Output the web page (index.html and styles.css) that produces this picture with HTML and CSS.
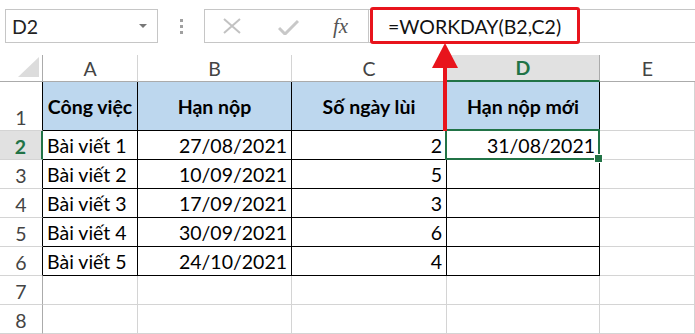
FILE: index.html
```html
<!DOCTYPE html>
<html lang="vi">
<head>
  <meta charset="UTF-8" />
  <title>WORKDAY</title>
  <link rel="stylesheet" href="styles.css">
</head>
<body>
  <div class="toolbar">
    <div class="namebox">
      <span>D2</span>
      <span class="drop"></span>
    </div>
    <div class="grip"><i></i><i></i><i></i></div>
    <div class="formulabar">
      <div class="fbtns">
        <svg class="ico-x" width="18" height="16" viewBox="0 0 18 16">
          <path d="M1 1 L17 15 M17 1 L1 15" stroke="#c2c2c2" stroke-width="2" fill="none"/>
        </svg>
        <svg class="ico-ok" width="21" height="16" viewBox="0 0 21 16">
          <path d="M1 9 L7 15 L20 2" stroke="#c8c8c8" stroke-width="3" fill="none"/>
        </svg>
        <span class="fx">fx</span>
      </div>
      <div class="finput">=WORKDAY(B2,C2)</div>
    </div>
  </div>

  <div class="sheet">
    <div class="c corner"></div>
    <div class="c ch">A</div>
    <div class="c ch">B</div>
    <div class="c ch">C</div>
    <div class="c ch sel">D</div>
    <div class="c ch last">E</div>

    <div class="c rh tb">1</div>
    <div class="c t hd">Công việc</div>
    <div class="c t hd">Hạn nộp</div>
    <div class="c t hd">Số ngày lùi</div>
    <div class="c t hd">Hạn nộp mới</div>
    <div class="c"></div>

    <div class="c rh tb sel">2</div>
    <div class="c t">Bài viết 1</div>
    <div class="c t r">27/08/2021</div>
    <div class="c t r">2</div>
    <div class="c t r active">31/08/2021</div>
    <div class="c"></div>

    <div class="c rh tb">3</div>
    <div class="c t">Bài viết 2</div>
    <div class="c t r">10/09/2021</div>
    <div class="c t r">5</div>
    <div class="c t"></div>
    <div class="c"></div>

    <div class="c rh tb">4</div>
    <div class="c t">Bài viết 3</div>
    <div class="c t r">17/09/2021</div>
    <div class="c t r">3</div>
    <div class="c t"></div>
    <div class="c"></div>

    <div class="c rh tb">5</div>
    <div class="c t">Bài viết 4</div>
    <div class="c t r">30/09/2021</div>
    <div class="c t r">6</div>
    <div class="c t"></div>
    <div class="c"></div>

    <div class="c rh tb">6</div>
    <div class="c t">Bài viết 5</div>
    <div class="c t r">24/10/2021</div>
    <div class="c t r">4</div>
    <div class="c t"></div>
    <div class="c"></div>

    <div class="c rh">7</div>
    <div class="c"></div>
    <div class="c"></div>
    <div class="c"></div>
    <div class="c"></div>
    <div class="c"></div>

    <div class="c rh">8</div>
    <div class="c"></div>
    <div class="c"></div>
    <div class="c"></div>
    <div class="c"></div>
    <div class="c"></div>
  </div>

  <!-- chú thích: khung đỏ quanh công thức và mũi tên -->
  <div class="callout"></div>
  <svg class="arrow" width="695" height="334" viewBox="0 0 695 334">
    <polygon points="445,43 432,68 458,68" fill="#e8141c"/>
    <rect x="443" y="66" width="4" height="65" fill="#e8141c"/>
  </svg>
</body>
</html>
```

FILE: styles.css
```css
* { box-sizing: border-box; }

body {
  margin: 0;
  width: 695px;
  height: 334px;
  overflow: hidden;
  background: #fff;
  font-family: Lato, "Open Sans", sans-serif;
  font-size: 19.5px;
  color: #000;
  position: relative;
}

.toolbar {
  height: 55px;
  display: flex;
  align-items: flex-start;
  padding-top: 9px;
}

.namebox {
  margin-left: 5px;
  width: 153px;
  height: 34px;
  border: 1px solid #c6c6c6;
  display: flex;
  align-items: center;
  justify-content: space-between;
  padding: 0 10px 0 6px;
  color: #222;
}

.drop {
  width: 0;
  height: 0;
  border-left: 4px solid transparent;
  border-right: 4px solid transparent;
  border-top: 4px solid #777;
}

.grip {
  width: 46px;
  height: 34px;
  display: flex;
  flex-direction: column;
  align-items: center;
  justify-content: center;
  gap: 3px;
}

.grip i {
  width: 3px;
  height: 3px;
  background: #a0a0a0;
}

.formulabar {
  flex: 1;
  height: 34px;
  border: 1px solid #c6c6c6;
  border-right: none;
  display: flex;
}

.fbtns {
  width: 163px;
  display: flex;
  align-items: center;
  padding-left: 18px;
}

.ico-x { margin-right: 37px; }
.ico-ok { margin-right: 34px; margin-top: 1px; }

.fx {
  font-family: "Liberation Serif", serif;
  font-style: italic;
  font-size: 21px;
  color: #555;
  margin-top: 1px;
}

.finput {
  flex: 1;
  border-left: 1px solid #c6c6c6;
  display: flex;
  align-items: center;
  padding-left: 19px;
  color: #111;
}

.sheet {
  display: grid;
  grid-template-columns: 43px 95px 154px 155px 153px 95px;
  grid-template-rows: 27px 49px repeat(7, 29px);
}

.c {
  border-right: 1px solid #d4d4d4;
  border-bottom: 1px solid #d4d4d4;
  display: flex;
  align-items: center;
  padding: 0 4px;
  white-space: nowrap;
  overflow: hidden;
}

.corner {
  border-right-color: #ababab;
  border-bottom-color: #ababab;
  position: relative;
}

.corner::after {
  content: "";
  position: absolute;
  right: 3px;
  bottom: 4px;
  width: 0;
  height: 0;
  border-left: 21px solid transparent;
  border-bottom: 20px solid #dcdcdc;
}

.ch {
  justify-content: center;
  color: #444;
  border-bottom-color: #ababab;
}

.ch.last { border-right: none; }

.ch.sel {
  background: #e1e1e1;
  color: #217346;
  font-weight: bold;
  border-bottom: 2px solid #217346;
  border-right-color: #ababab;
}

.rh {
  justify-content: center;
  align-items: flex-end;
  padding-bottom: 1px;
  color: #444;
  border-right-color: #ababab;
}

.rh.tb { border-right-color: #000; }

.rh.sel {
  background: #e1e1e1;
  color: #217346;
  font-weight: bold;
  border-right: 2px solid #217346;
}

.t {
  border-right-color: #000;
  border-bottom-color: #000;
}

.hd {
  background: #bdd7ee;
  font-weight: bold;
  justify-content: center;
}

.r { justify-content: flex-end; }

.active {
  position: relative;
  overflow: visible;
}

.active::after {
  content: "";
  position: absolute;
  top: -2px;
  left: -2px;
  right: -1px;
  bottom: -1px;
  border: 2px solid #217346;
}

.active::before {
  content: "";
  position: absolute;
  right: -4px;
  bottom: -4px;
  width: 7px;
  height: 7px;
  background: #217346;
  border: 1px solid #fff;
  z-index: 2;
}

.callout {
  position: absolute;
  left: 370px;
  top: 7px;
  width: 210px;
  height: 37px;
  border: 3px solid #e8141c;
  border-radius: 3px;
}

.arrow {
  position: absolute;
  left: 0;
  top: 0;
  pointer-events: none;
}
```
